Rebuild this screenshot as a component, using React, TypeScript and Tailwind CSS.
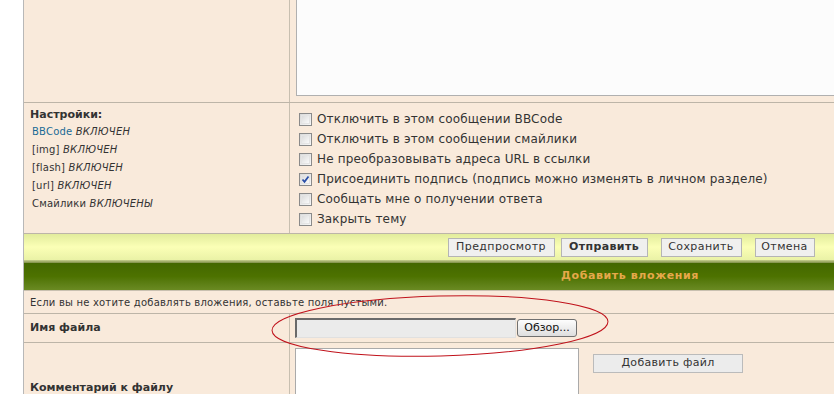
import React from "react";

const Checkbox = ({ checked }: { checked?: boolean }) => (
  <span className="relative inline-block w-[13px] h-[13px] border border-[#8a8a8a] bg-gradient-to-br from-[#d8d8d8] to-[#f8f8f8] shrink-0">
    <span className="absolute inset-[1px] border border-[#e4e4e4] bg-gradient-to-br from-[#dcdcdc] to-[#fafafa]" />
    {checked && (
      <svg className="absolute left-[1px] top-[1px]" width="9" height="9" viewBox="0 0 9 9">
        <path d="M1.5 4.5 L3.5 6.8 L7.5 1.5" fill="none" stroke="#2a4fa8" strokeWidth="1.8" />
      </svg>
    )}
  </span>
);

const Btn = ({ children, bold, w }: { children: React.ReactNode; bold?: boolean; w: string }) => (
  <div
    className={`${w} h-[19px] flex items-center justify-center border border-[#b5b5b5] bg-[#f0f0ef] text-[11px] text-[#333] tracking-[0.4px] ${bold ? "font-bold" : ""}`}
  >
    {children}
  </div>
);

export default function App() {
  const settings: [string, string, boolean?][] = [
    ["BBCode", "ВКЛЮЧЕН", true],
    ["[img]", "ВКЛЮЧЕН"],
    ["[flash]", "ВКЛЮЧЕН"],
    ["[url]", "ВКЛЮЧЕН"],
    ["Смайлики", "ВКЛЮЧЕНЫ"],
  ];
  const checks: [string, boolean?][] = [
    ["Отключить в этом сообщении BBCode"],
    ["Отключить в этом сообщении смайлики"],
    ["Не преобразовывать адреса URL в ссылки"],
    ["Присоединить подпись (подпись можно изменять в личном разделе)", true],
    ["Сообщать мне о получении ответа"],
    ["Закрыть тему"],
  ];
  return (
    <div className="relative w-[834px] h-[394px] overflow-hidden bg-white font-['DejaVu_Sans',sans-serif] text-[#333]">
      <div className="ml-[23px] w-[1213px] border-l border-[#b8b8b8] bg-[#f9eadb]">
        {/* Row 1: message area bottom */}
        <div className="flex h-[103px] border-b border-[#bdb5a8]">
          <div className="w-[266px] border-r border-[#c8bfb0]" />
          <div className="flex-1 pl-[6px]">
            <div className="h-[96px] border-l border-b border-[#b0b0b0] bg-[#fcfcfc]" />
          </div>
        </div>
        {/* Row 2: settings */}
        <div className="flex h-[131px] border-b border-[#bdb5a8]">
          <div className="w-[266px] border-r border-[#c8bfb0] pl-[6px] pt-[4px]">
            <div className="text-[11px] font-bold leading-[16px] text-[#333]">Настройки:</div>
            <div className="pl-[2px] text-[10px] leading-[18px] tracking-[0.2px]">
              {settings.map(([a, b, link]) => (
                <div key={a}>
                  <span className={link ? "text-[#1b6a96]" : ""}>{a}</span>{" "}
                  <span className="italic">{b}</span>
                </div>
              ))}
            </div>
          </div>
          <div className="flex-1 pl-[9px] pt-[6px]">
            {checks.map(([t, c]) => (
              <div key={t} className="flex items-center h-[20px] gap-[5px] text-[12px] text-[#333] tracking-[0.15px]">
                <Checkbox checked={c} />
                <span>{t}</span>
              </div>
            ))}
          </div>
        </div>
        {/* Button bar */}
        <div className="h-[26px] flex items-center justify-center bg-gradient-to-b from-[#e2ec9c] via-[#fbffb6] to-[#eaf2a6]">
          <div className="flex items-center gap-[6px] pl-[2px] pt-[1px]">
            <Btn w="w-[107px]">Предпросмотр</Btn>
            <Btn w="w-[87px]" bold>
              Отправить
            </Btn>
            <div className="w-[1px]" />
            <Btn w="w-[81px]">Сохранить</Btn>
            <div className="w-[1px]" />
            <Btn w="w-[60px]">Отмена</Btn>
          </div>
        </div>
        <div className="h-[3px] bg-gradient-to-b from-[#c8d090] to-[#7f8f48]" />
        {/* Green header */}
        <div className="h-[28px] flex items-center justify-center bg-gradient-to-b from-[#436700] via-[#4d7200] to-[#6a8a22] border-b border-[#c9c0b0]">
          <span className="text-[11px] font-bold text-[#e6a84a] tracking-[0.6px]">Добавить вложения</span>
        </div>
        {/* Info */}
        <div className="h-[23px] flex items-center pl-[6px] border-b border-[#bdb5a8] text-[10px] tracking-[0.2px]">
          Если вы не хотите добавлять вложения, оставьте поля пустыми.
        </div>
        {/* File name */}
        <div className="flex h-[29px] border-b border-[#bdb5a8]">
          <div className="w-[266px] border-r border-[#c8bfb0] pl-[6px] flex items-center text-[11px] font-bold">Имя файла</div>
          <div className="flex-1 pl-[5px] flex items-center gap-[1px]">
            <div className="w-[221px] h-[20px] bg-[#ebebeb] border-t-2 border-l-2 border-[#6a6a6a] border-r border-b border-r-[#e0e0e0] border-b-[#e0e0e0]" />
            <div className="w-[60px] h-[18px] rounded-[3px] border border-[#707070] bg-gradient-to-b from-[#fdfdfd] to-[#dedede] flex items-center justify-center text-[11px] text-[#111]">
              Обзор...
            </div>
          </div>
        </div>
        {/* Comment */}
        <div className="flex h-[60px]">
          <div className="w-[266px] border-r border-[#c8bfb0] pl-[6px] pt-[37px] text-[11px] font-bold">Комментарий к файлу</div>
          <div className="flex-1 pl-[5px] pt-[5px] flex gap-[14px]">
            <div className="w-[284px] h-[60px] bg-white border border-[#aaa]" />
            <div className="mt-[6px] w-[150px] h-[19px] border border-[#bbb] bg-[#ececec] flex items-center justify-center text-[11px] tracking-[0.3px]">
              Добавить файл
            </div>
          </div>
        </div>
      </div>
      <svg className="absolute left-0 top-0 pointer-events-none" width="834" height="394">
        <ellipse cx="440" cy="326" rx="168" ry="30" transform="rotate(-1.5 440 326)" fill="none" stroke="#c0121b" strokeWidth="1" />
      </svg>
    </div>
  );
}
